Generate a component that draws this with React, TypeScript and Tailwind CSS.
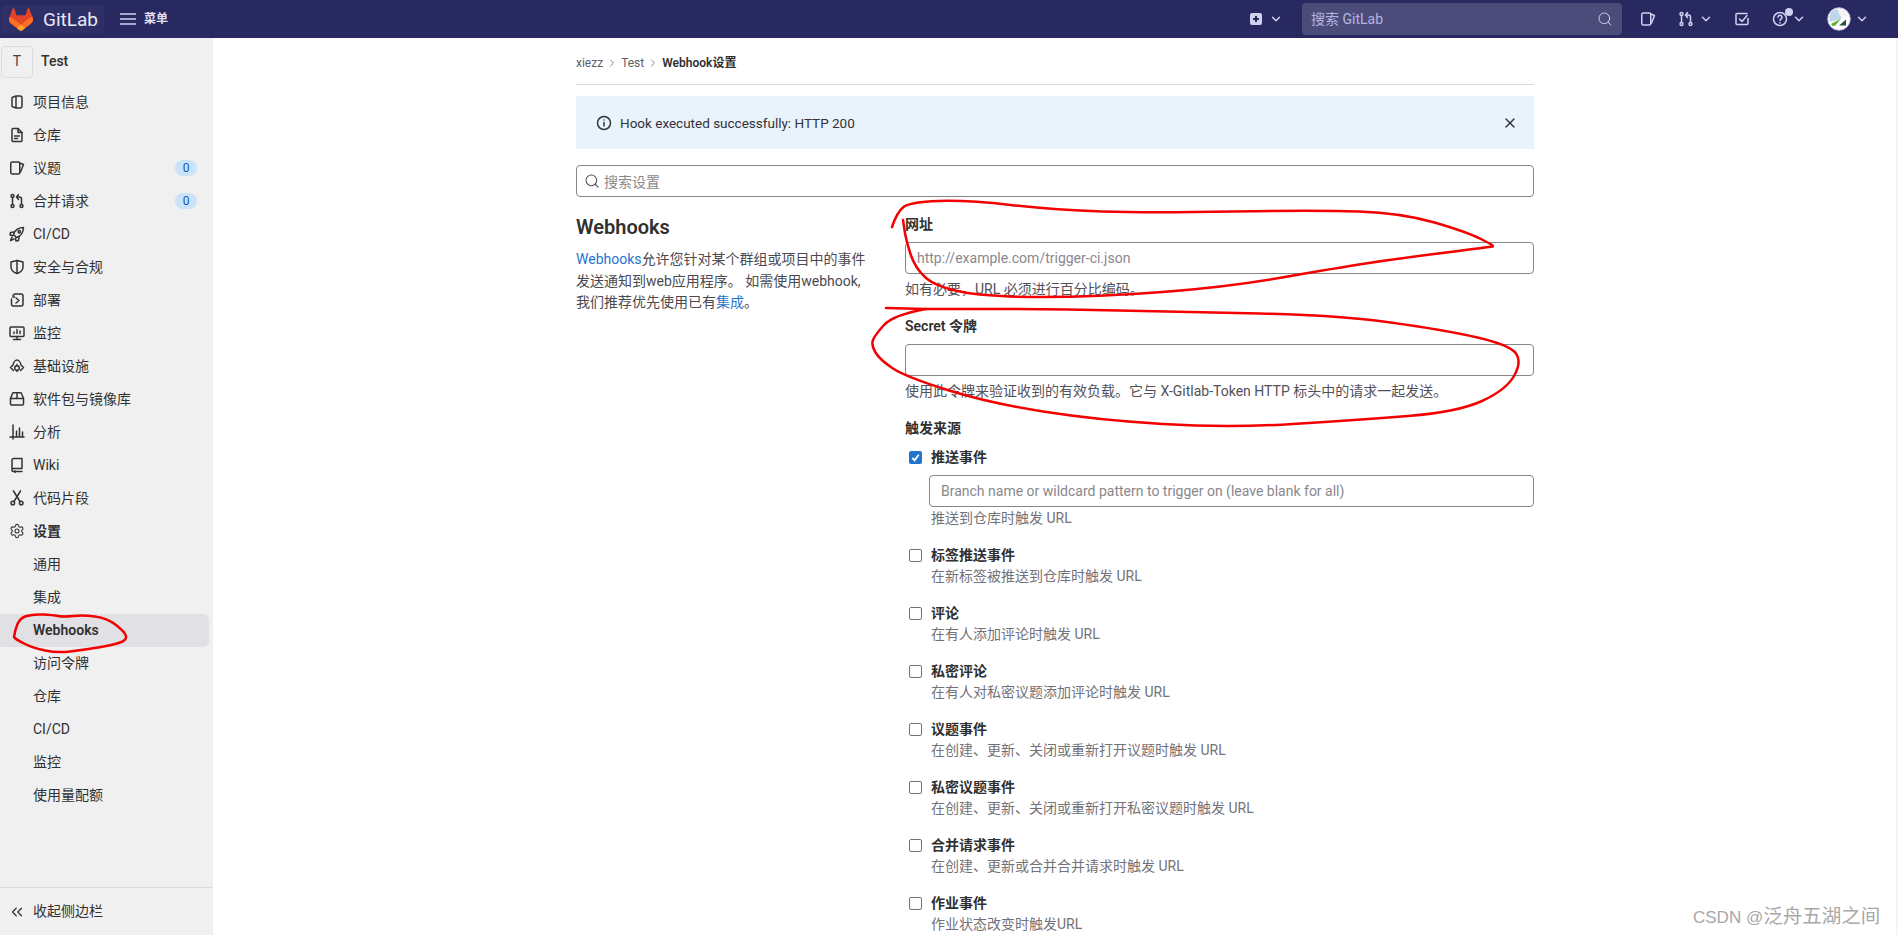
import { ChevronDown, ChevronRight, ChevronsLeft, Search, Settings as SettingsIcon, X } from 'lucide-react';
import type { ReactNode } from 'react';

const ico = (body: ReactNode, size = 16, cls = 'text-[#333238]') => (
  <svg width={size} height={size} viewBox="0 0 16 16" fill="none" stroke="currentColor" strokeWidth={1.5} strokeLinecap="round" strokeLinejoin="round" className={`shrink-0 ${cls}`}>
    {body}
  </svg>
);

const icons = {
  project: <path d="M7 2 3.600 3.200a1 1 0 0 0-.6.9v7.800a1 1 0 0 0 .6.9L7 14M7 2h4a2 2 0 0 1 2 2v8a2 2 0 0 1-2 2H7M7 2v12" />,
  doc: <><path d="M3 2.500a1 1 0 0 1 1-1h5l4 4v8a1 1 0 0 1-1 1H4a1 1 0 0 1-1-1z" /><path d="M9 1.500v4h4M5.500 9h5M5.500 11.500h3" /></>,
  issue: <><rect x="1.750" y="2" width="9" height="12" rx="1.500" /><path d="M10.750 3 14.500 4.500 11.500 12" /></>,
  merge: <><circle cx="3.500" cy="3" r="1.500" /><circle cx="3.500" cy="13" r="1.500" /><circle cx="12.500" cy="13" r="1.500" /><path d="M3.500 4.500v7M12.500 11.500V6a2 2 0 0 0-2-2H8M9.500 1.500 7.500 4l2 2.500" /></>,
  rocket: <><path d="M6 10 4.500 8.500C5.500 5 8.500 1.800 14.500 1.500 14.200 7.500 11 10.500 7.500 11.500z" /><circle cx="10.300" cy="5.700" r="1.200" /><path d="M5 6 1.500 6.500 1 9l3 .5M10 11l-.5 3.500-2.500.5-.5-3M3 11l-1.500 3.500L5 13" /></>,
  shield: <><path d="M8 1.500 2 3v4.500c0 3.500 2.500 6 6 7 3.500-1 6-3.500 6-7V3z" /><path d="M8 1.500v13" /></>,
  deploy: <path d="M4 3.500 5.500 2H12a2 2 0 0 1 2 2v8a2 2 0 0 1-2 2H4.500a2 2 0 0 1-2-2V7M5.500 5H3.800M7 6l3 2.500L7 11" />,
  monitor: <><rect x="1" y="2" width="14" height="9.500" rx="1" /><path d="M4.500 14.500h7M8 11.500v3M5 8.500V7M8 8.500V4.500M11 8.500V6" /></>,
  infra: <><path d="M4.500 12.500 1.500 9.500 4 7c.5-3 2.500-5 4-5s3.500 2 4 5l2.500 2.500-3 3" /><circle cx="8" cy="10" r="2.300" /><path d="M8 6.500v1M8 12.500v1" /></>,
  pkg: <><path d="M1.500 7.500 3.500 2.500a1 1 0 0 1 1-.7h7a1 1 0 0 1 1 .7l2 5V13a1 1 0 0 1-1 1h-11a1 1 0 0 1-1-1z" /><path d="M1.500 7.500h13M8 1.800v5.700" /></>,
  chart: <path d="M1 13h14M4 1v14M7.500 7v6M10.500 4v9M13.500 8v5" />,
  book: <><path d="M3 12.500V3a1.500 1.500 0 0 1 1.500-1.500H13v10H4.500A1.500 1.500 0 0 0 3 13a1.500 1.500 0 0 0 1.500 1.500H13" /><path d="M6 14v1.500" /></>,
  snippet: <><circle cx="3.800" cy="13" r="1.800" /><circle cx="12.200" cy="13" r="1.800" /><path d="M5 11.500 11.500 1M11 11.500 4.500 1" /></>,
};

const navItems: { icon: ReactNode; label: string; count?: string; bold?: boolean }[] = [
  { icon: icons.project, label: '项目信息' },
  { icon: icons.doc, label: '仓库' },
  { icon: icons.issue, label: '议题', count: '0' },
  { icon: icons.merge, label: '合并请求', count: '0' },
  { icon: icons.rocket, label: 'CI/CD' },
  { icon: icons.shield, label: '安全与合规' },
  { icon: icons.deploy, label: '部署' },
  { icon: icons.monitor, label: '监控' },
  { icon: icons.infra, label: '基础设施' },
  { icon: icons.pkg, label: '软件包与镜像库' },
  { icon: icons.chart, label: '分析' },
  { icon: icons.book, label: 'Wiki' },
  { icon: icons.snippet, label: '代码片段' },
  { icon: <SettingsIcon size={16} strokeWidth={1.600} className="text-[#333238]" />, label: '设置', bold: true },
];

const subItems = ['通用', '集成', 'Webhooks', '访问令牌', '仓库', 'CI/CD', '监控', '使用量配额'];

const triggers = [
  ['标签推送事件', '在新标签被推送到仓库时触发 URL'],
  ['评论', '在有人添加评论时触发 URL'],
  ['私密评论', '在有人对私密议题添加评论时触发 URL'],
  ['议题事件', '在创建、更新、关闭或重新打开议题时触发 URL'],
  ['私密议题事件', '在创建、更新、关闭或重新打开私密议题时触发 URL'],
  ['合并请求事件', '在创建、更新或合并合并请求时触发 URL'],
  ['作业事件', '作业状态改变时触发URL'],
];

// rough pen marks on top of the screenshot
const smooth = (p: number[][]) => {
  let d = `M${p[0][0]} ${p[0][1]}`;
  for (let i = 1; i < p.length - 1; i++) {
    const mx = (p[i][0] + p[i + 1][0]) / 2;
    const my = (p[i][1] + p[i + 1][1]) / 2;
    d += ` Q${p[i][0]} ${p[i][1]} ${mx} ${my}`;
  }
  const last = p[p.length - 1];
  return `${d} L${last[0]} ${last[1]}`;
};

const marks = [
  [[892, 227], [897, 212], [910, 202], [967, 200], [1054, 210], [1150, 213], [1315, 210], [1402, 213], [1467, 232], [1495, 246], [1490, 247], [1402, 258], [1336, 268], [1228, 287], [1097, 297], [989, 297], [936, 287], [915, 268], [906, 240], [903, 220]],
  [[886, 308], [926, 309]],
  [[926, 309], [893, 315], [875, 335], [871, 345], [880, 360], [906, 377], [989, 403], [1097, 420], [1228, 428], [1358, 420], [1458, 412], [1506, 390], [1522, 362], [1510, 345], [1445, 330], [1336, 315], [1184, 312], [1054, 309], [926, 309]],
  [[14, 637], [15, 630], [20, 618], [33, 614], [53, 615], [63, 617], [83, 615], [107, 618], [125, 632], [127, 640], [113, 645], [83, 650], [57, 653], [33, 648], [17, 640], [14, 637]],
];

function Checkbox({ checked }: { checked?: boolean }) {
  return checked ? (
    <span className="flex h-[13px] w-[13px] shrink-0 items-center justify-center rounded-[2px] bg-[#1f75cb]">
      <svg width="11" height="11" viewBox="0 0 12 12" fill="none" stroke="#fff" strokeWidth={2}>
        <path d="M2.500 6.500 5 9l4.500-6" />
      </svg>
    </span>
  ) : (
    <span className="h-[13px] w-[13px] shrink-0 rounded-[2px] border border-[#737278] bg-white" />
  );
}

function TopNav() {
  return (
    <header className="flex h-[38px] shrink-0 items-center bg-[#292961] text-[#d1d0f0]">
      <div className="ml-[1px] flex h-[29px] w-[103px] items-center rounded-[4px] bg-[#2f2f68] pl-[8px]">
        <svg width="24" height="23" viewBox="0 0 25 24" className="shrink-0">
          <path d="m24.507 9.5-.034-.09L21.082.562a.896.896 0 0 0-1.694.091l-2.29 7.01H7.825L5.535.653a.898.898 0 0 0-1.694-.09L.451 9.411.416 9.5a6.297 6.297 0 0 0 2.09 7.278l.012.01.03.022 5.16 3.867 2.56 1.935 1.554 1.176a1.051 1.051 0 0 0 1.268 0l1.555-1.176 2.56-1.935 5.197-3.89.014-.01A6.297 6.297 0 0 0 24.507 9.5Z" fill="#E24329" />
          <path d="m24.507 9.5-.034-.09a11.44 11.44 0 0 0-4.56 2.051l-7.447 5.632 4.742 3.584 5.197-3.89.014-.01A6.297 6.297 0 0 0 24.507 9.5Z" fill="#FC6D26" />
          <path d="m7.707 20.677 2.56 1.935 1.555 1.176a1.051 1.051 0 0 0 1.268 0l1.555-1.176 2.56-1.935-4.743-3.584-4.755 3.584Z" fill="#FCA326" />
          <path d="M5.01 11.461a11.43 11.43 0 0 0-4.56-2.05L.416 9.5a6.297 6.297 0 0 0 2.09 7.278l.012.01.03.022 5.16 3.867 4.745-3.584-7.444-5.632Z" fill="#FC6D26" />
        </svg>
        <span className="ml-[10px] text-[19px] leading-none text-[#e8e8f4]">GitLab</span>
      </div>
      <svg width="16" height="16" viewBox="0 0 16 16" fill="none" stroke="currentColor" strokeWidth={1.5} className="ml-[16px] shrink-0">
        <path d="M0 3h16M0 8h16M0 13h16" />
      </svg>
      <span className="ml-[8px] text-[12px] font-semibold text-[#e0e0f5]">菜单</span>

      <div className="ml-auto flex items-center">
        <svg width="12" height="12" viewBox="0 0 12 12" className="shrink-0">
          <rect width="12" height="12" rx="2" fill="#d1d0f0" />
          <path d="M6 3v6M3 6h6" stroke="#292961" strokeWidth={2} />
        </svg>
        <ChevronDown size={14} strokeWidth={2.500} className="ml-[7px]" />
        <div className="ml-[19px] flex h-[32px] w-[320px] items-center justify-between rounded-[4px] bg-[#4c4c7a] pl-[9px] pr-[9px] text-[14px]">
          <span className="text-[#b4b4e0]">搜索 GitLab</span>
          <Search size={16} strokeWidth={1.500} className="text-[#d1d0f0]" />
        </div>
        <span className="ml-[18px]">{ico(icons.issue, 16, 'text-[#d1d0f0]')}</span>
        <span className="ml-[22px]">{ico(icons.merge, 16, 'text-[#d1d0f0]')}</span>
        <ChevronDown size={14} strokeWidth={2.500} className="ml-[5px]" />
        <span className="ml-[21px]">
          {ico(<><path d="M14 7.500v5a1 1 0 0 1-1 1H3a1 1 0 0 1-1-1v-9a1 1 0 0 1 1-1h10" /><path d="m5.500 8 2.500 2.500 5-6" /></>, 16, 'text-[#d1d0f0]')}
        </span>
        <span className="relative ml-[22px]">
          {ico(<><circle cx="8" cy="8" r="6.500" /><path d="M6 6.200a2 2 0 1 1 3 1.800c-.7.4-1 .8-1 1.500M8 11.800v.1" /></>, 16, 'text-[#d1d0f0]')}
          <span className="absolute -top-[3px] left-[13px] h-[8px] w-[8px] rounded-full bg-[#d1d0f0]" />
        </span>
        <ChevronDown size={14} strokeWidth={2.500} className="ml-[4px]" />
        <svg width="24" height="24" viewBox="0 0 24 24" className="ml-[21px] shrink-0">
          <circle cx="12" cy="12" r="11" fill="#ffffff" />
          <path d="M3 7a11 11 0 0 1 6-5l3 2 2 3 1 4-8 3-4 1a11 11 0 0 1 0-8Z" fill="#bcd6ea" />
          <path d="M11 2h5l4 4v4l-5 1-3-4z" fill="#f4f4f4" />
          <path d="M4 17 14 11.500 8.500 18.500 5.500 19Z" fill="#5fb13a" />
          <path d="M12 18.500 19 12.500v6Z" fill="#24553a" />
          <circle cx="12" cy="12" r="11.250" fill="none" stroke="#d1d0f0" />
        </svg>
        <ChevronDown size={14} strokeWidth={2.500} className="ml-[4px] mr-[29px]" />
      </div>
    </header>
  );
}

function Sidebar() {
  return (
    <aside className="flex h-[897px] w-[213px] shrink-0 flex-col bg-[#f0f0f0] text-[14px] text-[#303030]">
      <div className="flex h-[47.500px] shrink-0 items-center gap-[8px] pl-[1px]">
        <span className="flex h-[32px] w-[32px] items-center justify-center rounded-[4px] border border-[#dcdcde] text-[#444]">T</span>
        <span className="font-medium">Test</span>
      </div>
      <nav className="flex-1">
        {navItems.map((item) => (
          <div key={item.label} className="flex h-[33px] items-center gap-[8px] pl-[9px] pr-[16px]">
            {item.bold ? item.icon : ico(item.icon)}
            <span className={item.bold ? 'font-semibold' : ''}>{item.label}</span>
            {item.count && (
              <span className="ml-auto flex h-[16px] w-[22px] items-center justify-center rounded-full bg-[#cbe2f9] text-[12px] text-[#0b5cad]">
                {item.count}
              </span>
            )}
          </div>
        ))}
        {subItems.map((label) => (
          <div
            key={label}
            className={`flex h-[33px] items-center pl-[33px] ${label === 'Webhooks' ? 'mr-[4px] rounded-r-[6px] bg-[#e1e1e5] font-semibold' : ''}`}
          >
            {label}
          </div>
        ))}
      </nav>
      <div className="flex h-[48px] shrink-0 items-center gap-[8px] border-t border-[#dcdcde] pl-[9px]">
        <ChevronsLeft size={18} strokeWidth={1.700} className="-ml-[1px] -mr-[1px] text-[#333238]" />
        <span>收起侧边栏</span>
      </div>
    </aside>
  );
}

function SettingsPage() {
  return (
    <main className="min-w-0 flex-1 pl-[1px] text-[14px] text-[#303030]">
      <div className="mx-auto w-[958px]">
        <div className="flex h-[47px] items-center gap-[3px] border-b border-[#dcdcde] pt-[3px] text-[12px] text-[#5e5e66]">
          <span>xiezz</span>
          <ChevronRight size={12} className="text-[#89888d]" />
          <span>Test</span>
          <ChevronRight size={12} className="text-[#89888d]" />
          <span className="font-semibold text-[#303030]">Webhook设置</span>
        </div>

        <div className="mt-[11px] flex h-[53px] items-center bg-[#e9f3fc] pl-[20px] pr-[16px]">
          {ico(<><circle cx="8" cy="8" r="6.500" /><path d="M8 7.500V11M8 5v.1" /></>)}
          <span className="ml-[8px] pt-[2px] text-[13.500px] text-[#333238]">Hook executed successfully: HTTP 200</span>
          <X size={16} strokeWidth={2} className="ml-auto text-[#333238]" />
        </div>

        <div className="mt-[16px] flex h-[32px] items-center rounded-[4px] border border-[#868686] pl-[7px]">
          <Search size={16} strokeWidth={1.600} className="text-[#535158]" />
          <span className="ml-[4px] pt-[2px] text-[#89888d]">搜索设置</span>
        </div>

        <div className="mt-[16px] flex">
          <section className="w-[329px] shrink-0">
            <h2 className="h-[28px] text-[20px] font-semibold leading-[28px] text-[#303030]">Webhooks</h2>
            <p className="mt-[8px] w-[300px] leading-[21.500px] text-[#4a4a50]">
              <span className="text-[#1f75cb]">Webhooks</span>允许您针对某个群组或项目中的事件发送通知到web应用程序。 如需使用webhook, 我们推荐优先使用已有<span className="text-[#1f75cb]">集成</span>。
            </p>
          </section>

          <section className="min-w-0 flex-1 leading-[21px]">
            <div className="pt-[1px] font-semibold">网址</div>
            <input
              readOnly
              placeholder="http://example.com/trigger-ci.json"
              className="mt-[7px] block h-[32px] w-full rounded-[4px] border border-[#868686] px-[11px] outline-none placeholder:text-[#89888d]"
            />
            <div className="mt-[4px] pt-[1px] text-[#535158]">如有必要，URL 必须进行百分比编码。</div>

            <div className="mt-[15px] pt-[1px] font-semibold">Secret 令牌</div>
            <input readOnly className="mt-[7px] block h-[32px] w-full rounded-[4px] border border-[#868686] px-[11px] outline-none" />
            <div className="mt-[4px] pt-[1px] text-[#535158]">使用此令牌来验证收到的有效负载。它与 X-Gitlab-Token HTTP 标头中的请求一起发送。</div>

            <div className="mt-[15px] pt-[1px] font-semibold">触发来源</div>
            <div className="mt-[7px] flex items-center pl-[4px]">
              <Checkbox checked />
              <span className="ml-[9px] pt-[1px] font-semibold">推送事件</span>
            </div>
            <input
              readOnly
              placeholder="Branch name or wildcard pattern to trigger on (leave blank for all)"
              className="ml-[24px] mt-[7px] block h-[32px] w-[605px] rounded-[4px] border border-[#868686] px-[11px] outline-none placeholder:text-[#89888d]"
            />
            <div className="pl-[26px] pt-[1px] text-[#737278]">推送到仓库时触发 URL</div>

            {triggers.map(([title, desc]) => (
              <div key={title} className="mt-[15px]">
                <div className="flex items-center pl-[4px]">
                  <Checkbox />
                  <span className="ml-[9px] pt-[1px] font-semibold">{title}</span>
                </div>
                <div className="pl-[26px] text-[#737278]">{desc}</div>
              </div>
            ))}
          </section>
        </div>
      </div>
    </main>
  );
}

export default function App() {
  return (
    <div className="relative flex h-[935px] w-[1898px] flex-col overflow-hidden bg-white font-['Roboto','Noto_Sans_CJK_SC',sans-serif]">
      <TopNav />
      <div className="flex min-h-0 flex-1">
        <Sidebar />
        <SettingsPage />
        <div className="w-[2px] shrink-0 bg-[#f5f5f5]" />
      </div>

      <svg width="1898" height="935" fill="none" stroke="#f40000" strokeWidth={2.500} strokeLinecap="round" className="pointer-events-none absolute left-0 top-0">
        {marks.map((m, i) => (
          <path key={i} d={smooth(m)} />
        ))}
      </svg>

      <div className="absolute left-[1693px] top-[903px] flex items-baseline whitespace-nowrap font-['Liberation_Sans','Noto_Sans_CJK_SC',sans-serif] text-[17px] leading-[26px] text-[#a8a8a8]">
        CSDN @<span className="text-[19.500px]">泛舟五湖之间</span>
      </div>
    </div>
  );
}
